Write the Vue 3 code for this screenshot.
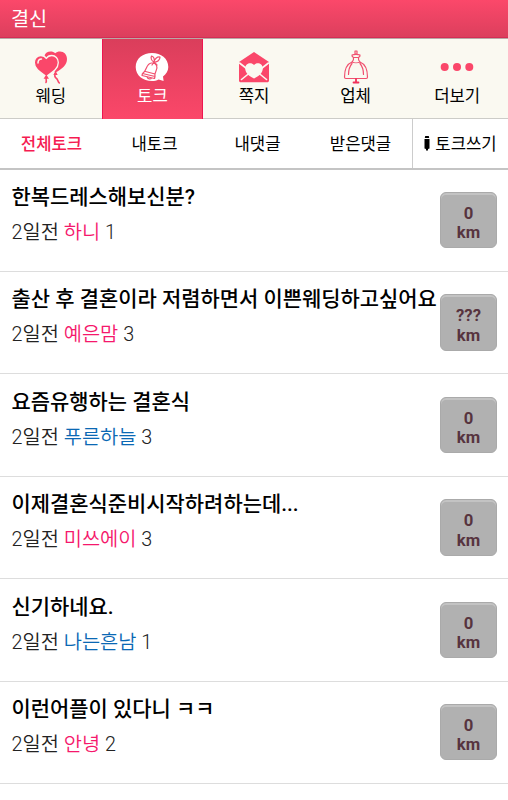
<template>
    <div class="app">
        <header class="topbar">결신</header>

        <nav class="menu">
            <a v-for="m in menus" :key="m.id" class="menu-item" :class="{ active: m.id === menu }" @click="menu = m.id">
                <svg v-if="m.id === 'wedding'" class="icon" viewBox="0 0 36 36">
                    <path class="fill" d="M22.500 23.500C29 20 34 16 34 10c0-4.500-3-7.500-7-7.500-2 0-3.500.5-4.800 1.800C21 3 19.500 2.500 17.500 2.500c-3 0-5 1.500-6 4l8 14z" />
                    <path class="string" d="M22.500 24c-1 2-1 4 .8 5.300 1.700 1 1.200 3 3 4.700" />
                    <path class="fill" d="M22.500 22l2.200 4h-4.400z" />
                    <path class="heart" d="M13.300 27.500C7.500 23.500 1.300 20 1.300 13.500c0-4 2.900-7 6.500-7 2.400 0 4.400 1 5.500 3 1.100-2 3.100-3 5.500-3 3.600 0 6.500 3 6.500 7 0 6.500-6.200 10-12 14z" />
                    <path class="shine" d="M5 14c0-2.500 1.300-4 3.500-4" />
                    <path class="fill" d="M13.300 25.500l2.700 4.200h-5.400z" />
                    <path class="string" d="M13.300 29c-.8 1.500.7 2.500-.3 4.500" />
                </svg>
                <svg v-else-if="m.id === 'talk'" class="icon" viewBox="0 0 36 36">
                    <path class="bubble" d="M18 4c9 0 16.300 5.500 16.300 14 0 4-2 7-5.300 9.500l.6 4.600-5-1.600C22.500 31.500 20.500 32 18 32 9 32 1.700 26.500 1.700 18S9 4 18 4z" />
                    <path class="line" d="M8.500 24.500c4.500-2 3-10 9-10.500 5.500-.3 6.500 4.500 4.500 8-1 2-1.300 3.500-1 5.500zM8.500 24.500L8 26.500l12.500 3 .5-2M13 28c.3 2 3.800 2.500 4.500 1M11.500 22.500l9.500 2.500M20 13c-2.500-1-3.500-4-2.500-6 2 .5 3.500 3 2.500 6zM20 13c.5-3 3-5.500 6-5 0 3-2.500 5.500-6 5zM20 13l-2 3M20 13l3 3" />
                </svg>
                <svg v-else-if="m.id === 'note'" class="icon" viewBox="0 0 36 36">
                    <path class="fill" d="M3 13L18 3l15 10v18.500c0 1-.7 1.800-1.800 1.800H4.800c-1.100 0-1.800-.8-1.800-1.800z" />
                    <path class="fold" d="M3.500 14l9 7M32.500 14l-9 7M5.500 30.500l8-6.500M30.500 30.500l-8-6.500" />
                    <path class="paper" d="M18 29.500c-5-2.500-8.800-5.500-8.800-10 0-5.200 6-6.700 8.800-3.500 2.800-3.200 8.800-1.700 8.800 3.500 0 4.500-3.800 7.500-8.800 10z" />
                </svg>
                <svg v-else-if="m.id === 'shop'" class="icon" viewBox="0 0 36 36">
                    <path class="line" d="M17 2h2v3h-2zM14 6c1.500-.7 2.500-.7 4-.7s2.500 0 4 .7c.3 1.500-.5 2-1.500 2.500h-5C14.500 8 13.700 7.500 14 6zM15.500 8.500c.3 1.500 0 3-1.500 4.500 2 1 6 1 8 0-1.500-1.500-1.800-3-1.500-4.500M14 13C9 15 6.500 20 6.500 28c0 1 .3 1.500 1.300 1.500h20.400c1 0 1.300-.5 1.300-1.500 0-8-2.500-13-7.500-15M14 14.500c-2.500 3-3.500 6-3.500 11M22 14.500c2.500 3 3.500 6 3.500 11" />
                    <path class="stand" d="M18 30v3M15.500 33.500h5" />
                </svg>
                <svg v-else class="icon" viewBox="0 0 36 36">
                    <circle class="fill" cx="5.700" cy="18" r="4" />
                    <circle class="fill" cx="18" cy="18" r="4" />
                    <circle class="fill" cx="30.300" cy="18" r="4" />
                </svg>
                <span class="menu-label">{{ m.label }}</span>
            </a>
        </nav>

        <nav class="tabs">
            <a v-for="t in tabs" :key="t" class="tab" :class="{ on: t === tab }" @click="tab = t">{{ t }}</a>
            <a class="write">
                <svg class="pencil" viewBox="0 0 6 15">
                    <path d="M1.200 0h3.600l.4 2H.8zM.5 3h5v9.500L4 13v1.500H2V13l-1.500-.5z" />
                </svg>
                토크쓰기
            </a>
        </nav>

        <ul class="list">
            <li v-for="p in posts" :key="p.title" class="post">
                <div class="body">
                    <h3 class="title">{{ p.title }}</h3>
                    <p class="meta">2일전 <span :class="p.sex">{{ p.name }}</span> {{ p.count }}</p>
                </div>
                <div class="distance">{{ p.km }}<br />km</div>
            </li>
        </ul>
    </div>
</template>

<script setup>
import { ref } from "vue"

const menu = ref("talk")
const tab = ref("전체토크")

const menus = [
    { id: "wedding", label: "웨딩" },
    { id: "talk", label: "토크" },
    { id: "note", label: "쪽지" },
    { id: "shop", label: "업체" },
    { id: "more", label: "더보기" }
]

const tabs = ["전체토크", "내토크", "내댓글", "받은댓글"]

const posts = [
    { title: "한복드레스해보신분?", name: "하니", sex: "female", count: 1, km: "0" },
    { title: "출산 후 결혼이라 저렴하면서 이쁜웨딩하고싶어요", name: "예은맘", sex: "female", count: 3, km: "???" },
    { title: "요즘유행하는 결혼식", name: "푸른하늘", sex: "male", count: 3, km: "0" },
    { title: "이제결혼식준비시작하려하는데...", name: "미쓰에이", sex: "female", count: 3, km: "0" },
    { title: "신기하네요.", name: "나는흔남", sex: "male", count: 1, km: "0" },
    { title: "이런어플이 있다니 ㅋㅋ", name: "안녕", sex: "female", count: 2, km: "0" }
]
</script>

<style>
body {
    margin: 0;
    background: #fff;
}
</style>

<style scoped>
.app {
    height: 800px;
    overflow: hidden;
    color: #000;
    font-family: Roboto, "Noto Sans CJK KR", sans-serif;
}

.topbar {
    box-sizing: border-box;
    height: 38px;
    padding: 1px 0 0 11px;
    border-bottom: 1px solid #d42d55;
    background: linear-gradient(#fb486a, #dc3f5d);
    color: #fff;
    font-size: 19.700px;
    line-height: 38px;
}

.menu {
    display: flex;
    box-sizing: border-box;
    height: 81px;
    border-top: 1px solid #b9a8a5;
    background: #faf9f1;
}

.menu-item {
    display: flex;
    flex: 0 0 20%;
    flex-direction: column;
    align-items: center;
    box-sizing: border-box;
    padding-top: 10px;
    border-bottom: 1px solid #ccccc8;
}

.menu-item.active {
    border: solid #ee1550;
    border-width: 0 1px;
    background: linear-gradient(#da3e5b, #fb4769);
    color: #fff;
}

.icon {
    width: 36px;
    height: 36px;
    fill: none;
    stroke-linecap: round;
    stroke-linejoin: round;
}

.menu-label {
    font-size: 16.700px;
    line-height: 24px;
}

.fill {
    fill: #fa476a;
}

.heart {
    fill: #fa476a;
    stroke: #faf9f1;
    stroke-width: 1.3;
}

.shine {
    stroke: #faf9f1;
    stroke-width: 1.5;
}

.string {
    stroke: #fa476a;
    stroke-width: 1.6;
}

.bubble {
    fill: #fff;
}

.line {
    stroke: #f0506f;
    stroke-width: 1.2;
}

.fold {
    stroke: #faf9f1;
    stroke-width: 1.6;
}

.paper {
    fill: #faf9f1;
}

.stand {
    stroke: #f0305a;
    stroke-width: 1.8;
}

.tabs {
    display: flex;
    box-sizing: border-box;
    height: 50.700px;
    border-bottom: 2px solid #c4c4c4;
    font-size: 16.700px;
    line-height: 51px;
}

.tab {
    flex: 1;
    text-align: center;
}

.tab.on {
    color: #f51c52;
    font-weight: 500;
}

.write {
    display: flex;
    align-items: flex-start;
    justify-content: center;
    box-sizing: border-box;
    width: 96px;
    gap: 5px;
    border-left: 1px solid #ccc;
}

.pencil {
    width: 6px;
    height: 15px;
    margin-top: 17px;
}

.list {
    margin: 0;
    padding: 0;
    list-style: none;
}

.post {
    display: flex;
    justify-content: space-between;
    box-sizing: border-box;
    height: 102.400px;
    padding: 12.300px 11px 0 11.500px;
    border-bottom: 1px solid #ddd;
}

.body {
    flex: 1;
    min-width: 0;
    white-space: nowrap;
}

.title {
    margin: 0;
    font-size: 20.950px;
    font-weight: 500;
    line-height: 30px;
}

.meta {
    margin: 6px 0 0;
    color: #222;
    font-size: 19.800px;
    font-weight: 350;
    line-height: 30px;
}

.female {
    color: #f5186c;
}

.male {
    color: #0a68b4;
}

.distance {
    flex: none;
    box-sizing: border-box;
    width: 57px;
    height: 56.500px;
    margin-top: 10px;
    padding-top: 11px;
    border: 1px solid #aaa;
    border-radius: 6px;
    background: #b1b1b1;
    box-shadow: inset 0 2px #c3c3c3;
    color: #57343f;
    font-size: 16.700px;
    font-weight: bold;
    line-height: 19.500px;
    text-align: center;
}
</style>
